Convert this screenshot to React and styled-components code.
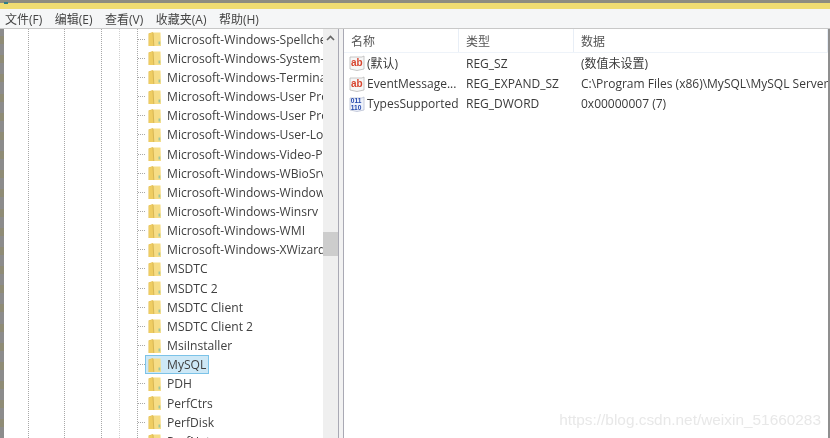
import React from "react";
import styled, { createGlobalStyle } from "styled-components";

const Global = createGlobalStyle`
  html, body { margin: 0; padding: 0; background: #8e8c80; overflow: hidden; }
  #root { width: 830px; height: 438px; }
`;

const Page = styled.div`
  position: relative;
  width: 830px;
  height: 438px;
  display: flex;
  flex-direction: column;
  overflow: hidden;
  font-family: "Open Sans", "Noto Sans CJK SC", sans-serif;
  font-size: 12.1px;
  color: #3a3a3a;
  background: #fff;
  filter: blur(0.35px);
`;

const TopEdge = styled.div`
  height: 3px;
  flex: none;
  background: #8e8c80;
`;

const TitleBar = styled.div`
  position: relative;
  height: 6px;
  flex: none;
  background: #f0dc72;
`;

const TitleBadge = styled.span`
  position: absolute;
  top: -1px;
  left: 4px;
  width: 4px;
  height: 2px;
  background: #2f7f86;
`;

const MenuBar = styled.nav`
  height: 19px;
  flex: none;
  display: flex;
  align-items: center;
  gap: 12.5px;
  padding-left: 5px;
  background: #f5f6f7;
  font-size: 12px;
  color: #444;
`;

const Main = styled.div`
  flex: 1;
  min-height: 0;
  display: flex;
  border-top: 1px solid #c8c8c8;
`;

const LeftEdge = styled.div`
  width: 4px;
  flex: none;
  background-color: #8c8c8c;
  background-image: repeating-linear-gradient(
    to bottom,
    #8c8c8c 0 7px,
    #8f8c76 7px 15px,
    #8c8c8c 15px 19.17px
  );
`;

const Tree = styled.div`
  width: 319px;
  flex: none;
  padding-top: 0.5px;
  overflow: hidden;
  background-color: #fff;
  background-image:
    repeating-linear-gradient(to bottom, #a8a8a8 0 1px, transparent 1px 2px),
    repeating-linear-gradient(to bottom, #a8a8a8 0 1px, transparent 1px 2px),
    repeating-linear-gradient(to bottom, #a8a8a8 0 1px, transparent 1px 2px),
    repeating-linear-gradient(to bottom, #d0d0d0 0 1px, transparent 1px 2px),
    repeating-linear-gradient(to bottom, #a8a8a8 0 1px, transparent 1px 2px);
  background-size: 1px 100%;
  background-repeat: no-repeat;
  background-position: 24px 0, 60px 0, 97px 0, 115px 0, 133px 0;
`;

const Row = styled.div`
  height: 19.17px;
  display: flex;
  align-items: center;
  padding-left: 134px;
  white-space: nowrap;
`;

const Connector = styled.span`
  width: 7px;
  flex: none;
  border-top: 1px dotted #a8a8a8;
`;

const Node = styled.span`
  display: flex;
  align-items: center;
  gap: 4px;
  height: 19px;
  box-sizing: border-box;
  padding: 0 3px 0 2px;
  background: ${(p) => (p.$selected ? "#cde8f6" : "transparent")};
  outline: ${(p) => (p.$selected ? "1px solid #7cc3e8" : "none")};
  outline-offset: -1px;
  color: #404040;
`;

const Scrollbar = styled.div`
  position: relative;
  width: 15px;
  flex: none;
  background: #efefef;
`;

const ScrollArrow = styled.svg`
  position: absolute;
  top: 6px;
  left: 3px;
`;

const ScrollThumb = styled.div`
  position: absolute;
  top: 203px;
  left: 0;
  width: 15px;
  height: 24px;
  background: #cdcdcd;
`;

const Splitter = styled.div`
  width: 6px;
  flex: none;
  box-sizing: border-box;
  background: #f2f2f2;
  border-left: 1px solid #a9a9b4;
  border-right: 1px solid #a9a9b4;
`;

const ListPane = styled.div`
  flex: 1;
  min-width: 0;
  overflow: hidden;
`;

const ColumnHeader = styled.div`
  display: grid;
  grid-template-columns: 115px 115px 1fr;
  height: 23px;
  border-bottom: 1px solid #eef3f9;
  font-size: 12px;
`;

const HeaderCell = styled.div`
  display: flex;
  align-items: center;
  padding-left: 7px;
  color: #555;
  border-right: 1px solid #e8eef6;
`;

const ListRow = styled.div`
  display: grid;
  grid-template-columns: 115px 115px 1fr;
  height: 20.4px;
  align-items: center;
  white-space: nowrap;
  font-size: 12px;
`;

const NameCell = styled.div`
  display: flex;
  align-items: center;
  gap: 2px;
  padding-left: 5px;
  overflow: hidden;
`;

const ValueCell = styled.div`
  padding-left: 7px;
  overflow: hidden;
`;

const RightEdge = styled.div`
  width: 2px;
  flex: none;
  background: #8f8f8f;
`;

const Watermark = styled.div`
  position: absolute;
  right: 9px;
  bottom: 9px;
  font-family: "Liberation Sans", sans-serif;
  font-size: 15.4px;
  color: #e8e8e8;
`;

const Folder = () => (
  <svg width="16" height="16" viewBox="0 0 16 16" style={{ flex: "none" }}>
    <path d="M1.5 2.5 L6 1 L6 15 L1.5 15 Z" fill="#e3bd4e" />
    <path d="M5.5 1.5 L13.5 1.5 L14 15 L5.5 15 Z" fill="#f6dd86" />
    <path d="M2 3 L5 1.8 L6 2 L6.5 15 L2 15 Z" fill="#efcd62" />
    <path d="M6 1.8 L6.8 15" stroke="#d8b653" strokeWidth="1" fill="none" />
    <path d="M11.5 10.5 L13.2 10.5 L13.2 13.5 L11.5 13.5 Z" fill="#9cc6a0" />
  </svg>
);

const StringIcon = () => (
  <svg width="16" height="16" viewBox="0 0 16 16" style={{ flex: "none" }}>
    <path d="M1 2 L13 2 L15 1 L15 14 L8 15.5 L1 14 Z" fill="#f7f7f7" stroke="#b9b9b9" strokeWidth="0.8" />
    <text x="2" y="10.5" fontFamily="Liberation Sans, sans-serif" fontSize="10" fontWeight="700" fill="#d8452f">ab</text>
  </svg>
);

const BinaryIcon = () => (
  <svg width="16" height="16" viewBox="0 0 16 16" style={{ flex: "none" }}>
    <path d="M1 2 L13 2 L15 1 L15 14 L8 15.5 L1 14 Z" fill="#eef2fb" stroke="#b9bfd2" strokeWidth="0.8" />
    <text x="1.8" y="7.3" fontFamily="Liberation Sans, sans-serif" fontSize="6.6" fontWeight="700" fill="#2449ad">011</text>
    <text x="1.8" y="13.5" fontFamily="Liberation Sans, sans-serif" fontSize="6.6" fontWeight="700" fill="#2449ad">110</text>
  </svg>
);

const menus = ["文件(F)", "编辑(E)", "查看(V)", "收藏夹(A)", "帮助(H)"];

const keys = [
  "Microsoft-Windows-Spellchecking",
  "Microsoft-Windows-System-Restore",
  "Microsoft-Windows-TerminalServices",
  "Microsoft-Windows-User Profiles",
  "Microsoft-Windows-User Profile",
  "Microsoft-Windows-User-Loader",
  "Microsoft-Windows-Video-Prevalent",
  "Microsoft-Windows-WBioSrvc",
  "Microsoft-Windows-Windows",
  "Microsoft-Windows-Winsrv",
  "Microsoft-Windows-WMI",
  "Microsoft-Windows-XWizards",
  "MSDTC",
  "MSDTC 2",
  "MSDTC Client",
  "MSDTC Client 2",
  "MsiInstaller",
  "MySQL",
  "PDH",
  "PerfCtrs",
  "PerfDisk",
  "PerfNet",
];

const values = [
  { icon: <StringIcon />, name: "(默认)", type: "REG_SZ", data: "(数值未设置)" },
  { icon: <StringIcon />, name: "EventMessage...", type: "REG_EXPAND_SZ", data: "C:\\Program Files (x86)\\MySQL\\MySQL Server 5.7\\bin" },
  { icon: <BinaryIcon />, name: "TypesSupported", type: "REG_DWORD", data: "0x00000007 (7)" },
];

export default function App() {
  return (
    <Page>
      <Global />
      <TopEdge />
      <TitleBar>
        <TitleBadge />
      </TitleBar>
      <MenuBar>
        {menus.map((m) => (
          <span key={m}>{m}</span>
        ))}
      </MenuBar>
      <Main>
        <LeftEdge />
        <Tree>
          {keys.map((k) => (
            <Row key={k}>
              <Connector />
              <Node $selected={k === "MySQL"}>
                <Folder />
                {k}
              </Node>
            </Row>
          ))}
        </Tree>
        <Scrollbar>
          <ScrollArrow width="9" height="6" viewBox="0 0 9 6">
            <path d="M1 5 L4.5 1.5 L8 5" stroke="#666" strokeWidth="1.6" fill="none" />
          </ScrollArrow>
          <ScrollThumb />
        </Scrollbar>
        <Splitter />
        <ListPane>
          <ColumnHeader>
            <HeaderCell>名称</HeaderCell>
            <HeaderCell>类型</HeaderCell>
            <HeaderCell>数据</HeaderCell>
          </ColumnHeader>
          {values.map((v) => (
            <ListRow key={v.name}>
              <NameCell>
                {v.icon}
                {v.name}
              </NameCell>
              <ValueCell>{v.type}</ValueCell>
              <ValueCell>{v.data}</ValueCell>
            </ListRow>
          ))}
        </ListPane>
        <RightEdge />
      </Main>
      <Watermark>https://blog.csdn.net/weixin_51660283</Watermark>
    </Page>
  );
}
